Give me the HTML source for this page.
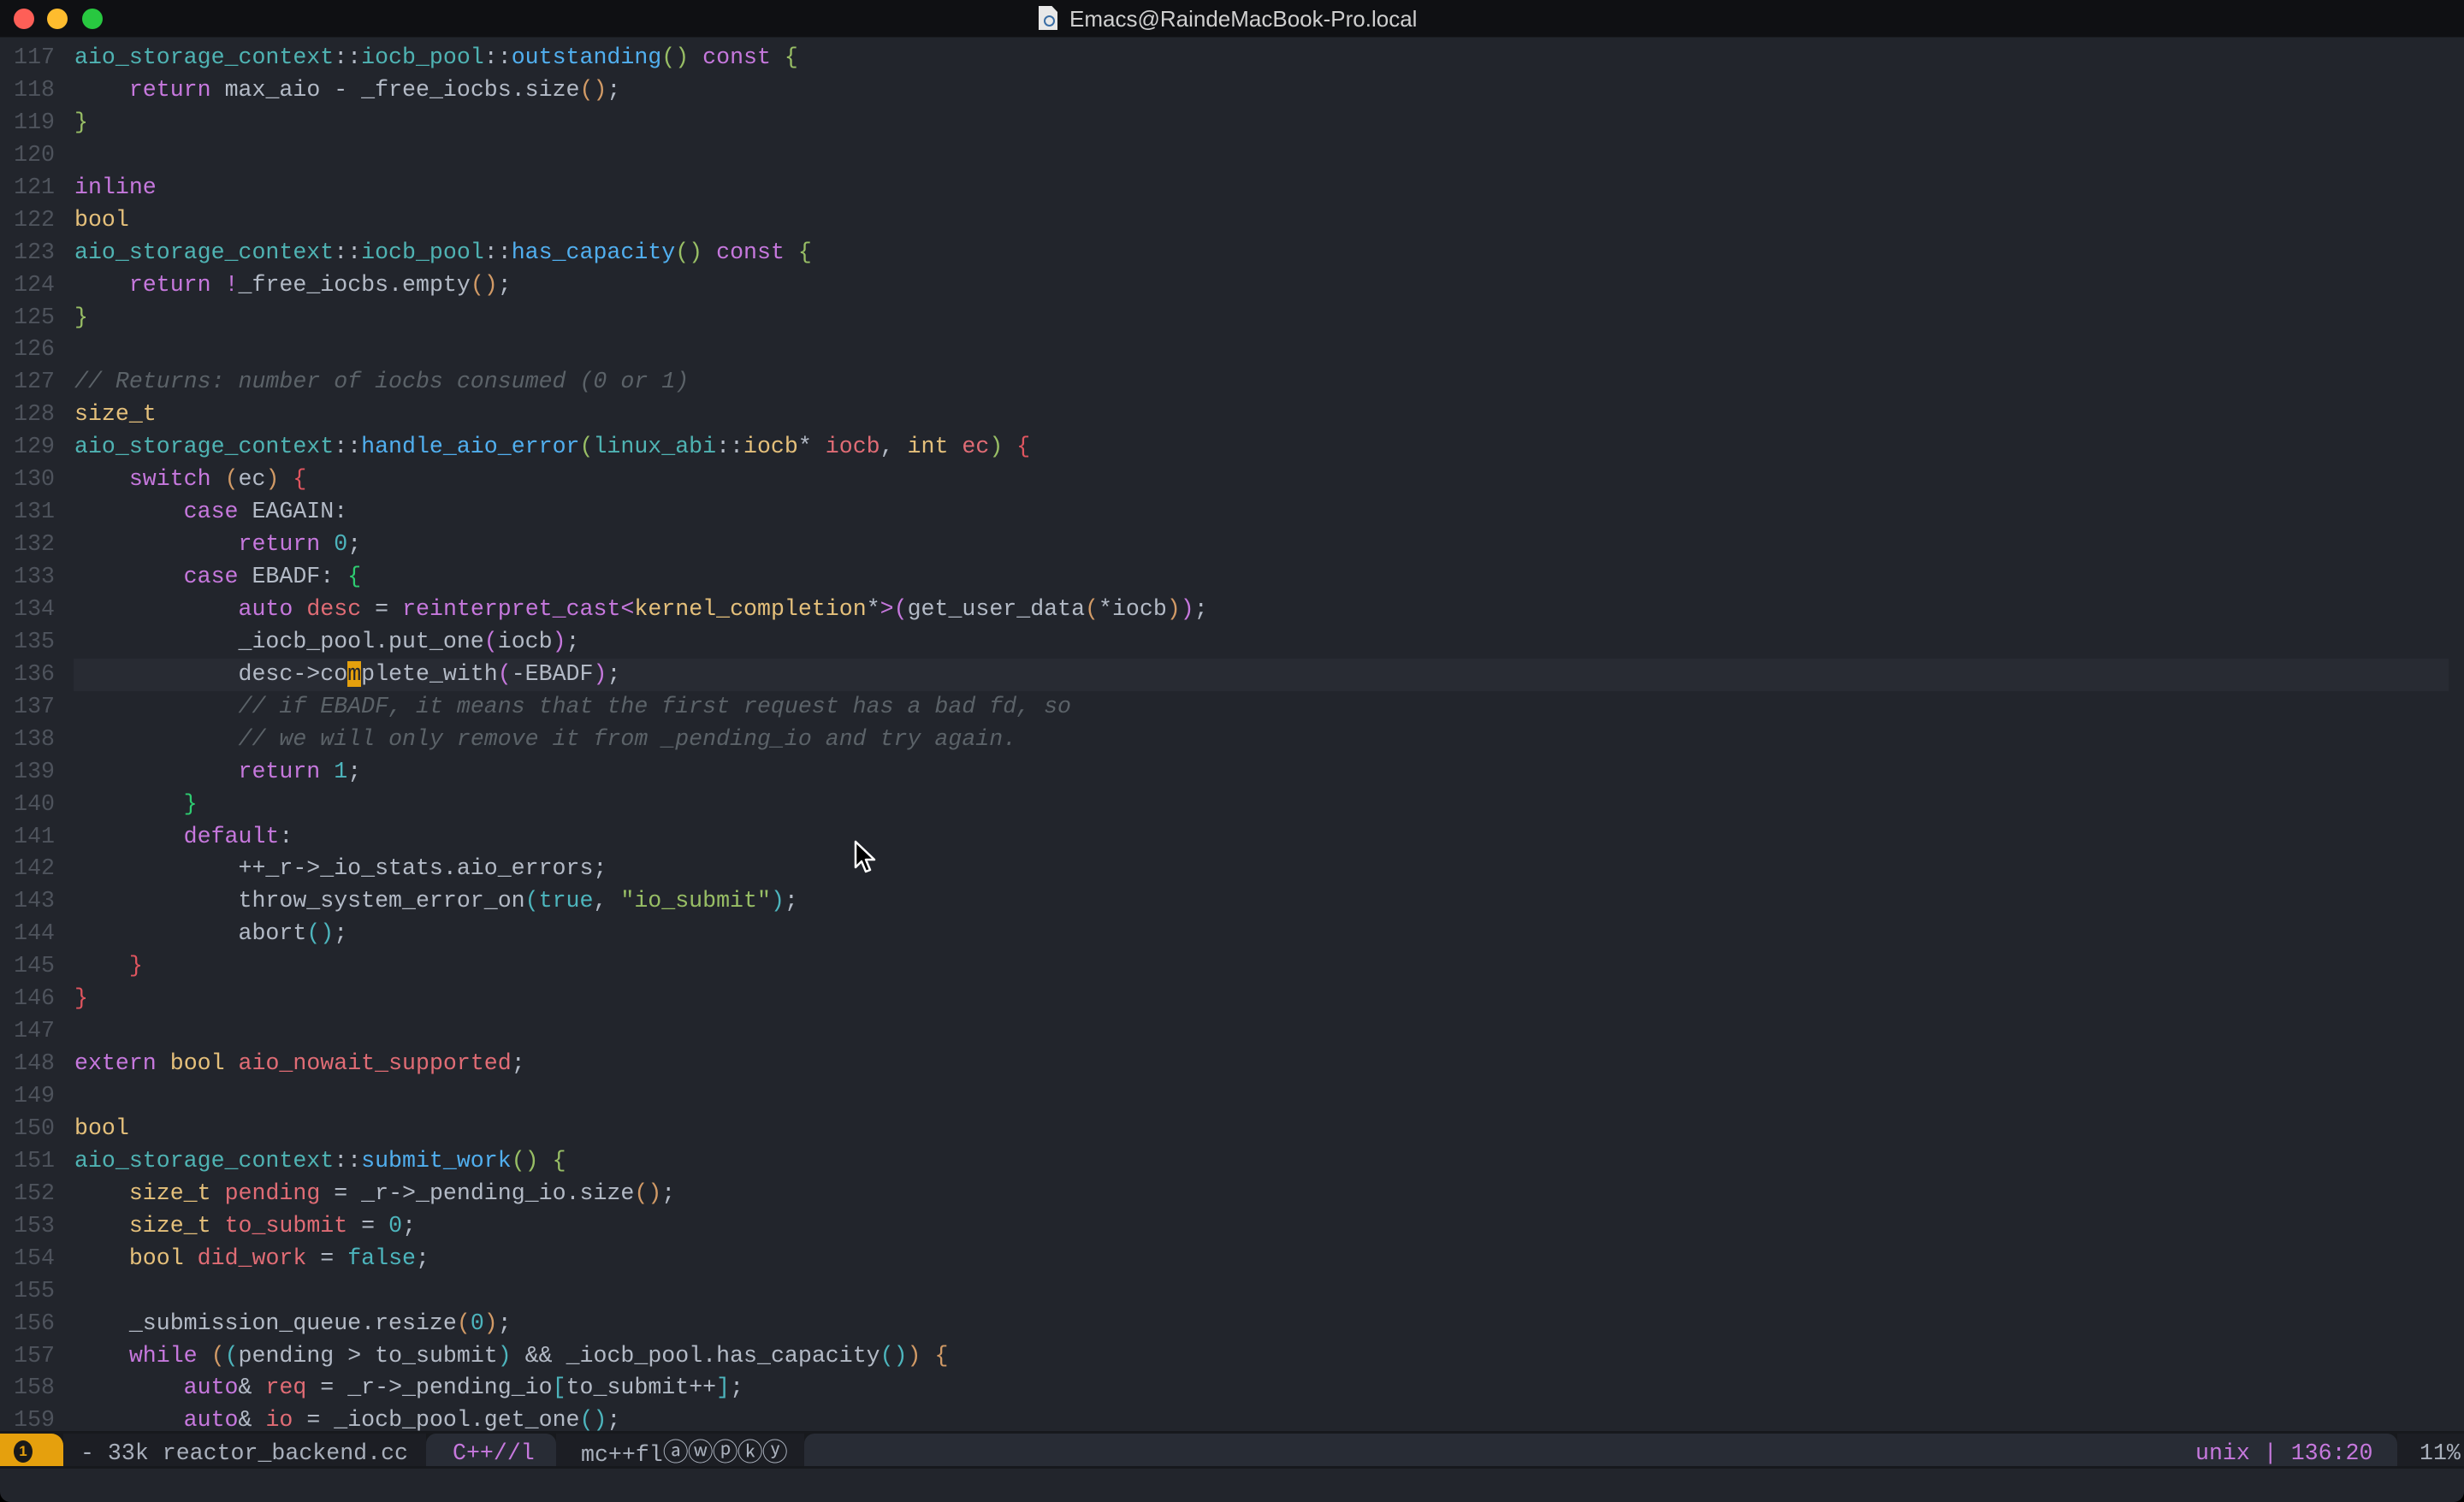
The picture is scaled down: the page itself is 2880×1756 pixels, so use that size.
<!DOCTYPE html>
<html><head><meta charset="utf-8"><style>
html,body{margin:0;padding:0;background:#000;}
#win{position:relative;width:2880px;height:1756px;background:#22252c;overflow:hidden;border-radius:0 0 12px 12px;font-family:"Liberation Mono",monospace;}
#title{position:absolute;left:0;top:0;width:2880px;height:43px;background:#0f1013;border-bottom:1px solid #1a1c20;}
.tl{position:absolute;top:10px;width:24px;height:24px;border-radius:50%;}
#ttext{position:absolute;left:1250px;top:7px;font-family:"Liberation Sans",sans-serif;font-size:26px;color:#cfcfcf;}
#ticon{position:absolute;left:1214px;top:7px;width:22px;height:28px;background:#e8e8e8;clip-path:polygon(0 0,70% 0,100% 25%,100% 100%,0 100%);}
#ticon:after{content:"";position:absolute;left:6px;top:11px;width:9px;height:9px;border-radius:50%;border:2px solid #3a6ea5;}
#hl{position:absolute;left:86px;top:770px;width:2776px;height:38px;background:#282b33;}
#nums{position:absolute;left:0;top:49px;width:64px;text-align:right;font-size:26.6px;line-height:37.93px;color:#4e535c;white-space:pre;}
#code{position:absolute;left:87px;top:49px;font-size:26.6px;line-height:37.93px;color:#b3bac6;white-space:pre;}
.k{color:#c678dd}.t{color:#e5c07b}.n{color:#4fb3b3}.f{color:#51afef}.v{color:#e06c75}
.c{color:#5b6268;font-style:italic}.s{color:#98be65}.cn{color:#4db5bd}
.g{color:#98be65}.o{color:#d19a66}.r{color:#e0555f}.G{color:#2ecc71}.p{color:#c678dd}.cy{color:#4db5bd}
.cur{background:#e5a00d;color:#22252c}
#ml{position:absolute;left:0;top:1673px;width:2880px;height:44px;background:#17191d;}
.seg{position:absolute;top:3px;height:38px;}
.mt{position:absolute;top:1680px;font-size:26.6px;line-height:38px;white-space:pre;}
</style></head><body><div id="win">
<div id="title">
<div class="tl" style="left:16px;background:#fe5f57"></div>
<div class="tl" style="left:55px;background:#febc2e"></div>
<div class="tl" style="left:96px;background:#28c840"></div>
<div id="ticon"></div>
<div id="ttext">Emacs@RaindeMacBook-Pro.local</div>
</div>
<div id="hl"></div>
<div id="nums">117
118
119
120
121
122
123
124
125
126
127
128
129
130
131
132
133
134
135
136
137
138
139
140
141
142
143
144
145
146
147
148
149
150
151
152
153
154
155
156
157
158
159</div>
<div id="code"><span class="n">aio_storage_context</span>::<span class="n">iocb_pool</span>::<span class="f">outstanding</span><span class="g">()</span> <span class="k">const</span> <span class="g">{</span>
    <span class="k">return</span> max_aio - _free_iocbs.size<span class="o">()</span>;
<span class="g">}</span>

<span class="k">inline</span>
<span class="t">bool</span>
<span class="n">aio_storage_context</span>::<span class="n">iocb_pool</span>::<span class="f">has_capacity</span><span class="g">()</span> <span class="k">const</span> <span class="g">{</span>
    <span class="k">return</span> <span class="k">!</span>_free_iocbs.empty<span class="o">()</span>;
<span class="g">}</span>

<span class="c">// Returns: number of iocbs consumed (0 or 1)</span>
<span class="t">size_t</span>
<span class="n">aio_storage_context</span>::<span class="f">handle_aio_error</span><span class="g">(</span><span class="n">linux_abi</span>::<span class="t">iocb</span>* <span class="v">iocb</span>, <span class="t">int</span> <span class="v">ec</span><span class="g">)</span> <span class="r">{</span>
    <span class="k">switch</span> <span class="o">(</span>ec<span class="o">)</span> <span class="r">{</span>
        <span class="k">case</span> EAGAIN:
            <span class="k">return</span> <span class="cn">0</span>;
        <span class="k">case</span> EBADF: <span class="G">{</span>
            <span class="k">auto</span> <span class="v">desc</span> = <span class="k">reinterpret_cast</span><span class="p">&lt;</span><span class="t">kernel_completion</span>*<span class="p">&gt;(</span>get_user_data<span class="o">(</span>*iocb<span class="o">)</span><span class="p">)</span>;
            _iocb_pool.put_one<span class="p">(</span>iocb<span class="p">)</span>;
            desc-&gt;co<span class="cur">m</span>plete_with<span class="p">(</span>-EBADF<span class="p">)</span>;
            <span class="c">// if EBADF, it means that the first request has a bad fd, so</span>
            <span class="c">// we will only remove it from _pending_io and try again.</span>
            <span class="k">return</span> <span class="cn">1</span>;
        <span class="G">}</span>
        <span class="k">default</span>:
            ++_r-&gt;_io_stats.aio_errors;
            throw_system_error_on<span class="cy">(</span><span class="cn">true</span>, <span class="s">"io_submit"</span><span class="cy">)</span>;
            abort<span class="cy">()</span>;
    <span class="r">}</span>
<span class="r">}</span>

<span class="k">extern</span> <span class="t">bool</span> <span class="v">aio_nowait_supported</span>;

<span class="t">bool</span>
<span class="n">aio_storage_context</span>::<span class="f">submit_work</span><span class="g">()</span> <span class="g">{</span>
    <span class="t">size_t</span> <span class="v">pending</span> = _r-&gt;_pending_io.size<span class="o">()</span>;
    <span class="t">size_t</span> <span class="v">to_submit</span> = <span class="cn">0</span>;
    <span class="t">bool</span> <span class="v">did_work</span> = <span class="cn">false</span>;

    _submission_queue.resize<span class="o">(</span><span class="cn">0</span><span class="o">)</span>;
    <span class="k">while</span> <span class="o">(</span><span class="cy">(</span>pending &gt; to_submit<span class="cy">)</span> &amp;&amp; _iocb_pool.has_capacity<span class="cy">()</span><span class="o">)</span> <span class="o">{</span>
        <span class="k">auto</span>&amp; <span class="v">req</span> = _r-&gt;_pending_io<span class="cy">[</span>to_submit++<span class="cy">]</span>;
        <span class="k">auto</span>&amp; <span class="v">io</span> = _iocb_pool.get_one<span class="cy">()</span>;</div>
<div id="ml">
<div class="seg" style="left:0;width:74px;background:#e5a00d;border-radius:0 14px 0 0"></div>
<div class="seg" style="left:74px;width:424px;background:#1c1e24"></div>
<div class="seg" style="left:498px;width:152px;background:#282c35;border-radius:12px 12px 0 0"></div>
<div class="seg" style="left:650px;width:290px;background:#1c1e24"></div>
<div class="seg" style="left:940px;width:1862px;background:#282c35;border-radius:12px 12px 0 0"></div>
<div class="seg" style="left:2802px;width:78px;background:#1c1e24"></div>
</div>
<div style="position:absolute;left:16px;top:1684px;width:22px;height:26px;border-radius:50%;background:#1a1a1a;color:#e5a00d;font:bold 17px 'Liberation Sans',sans-serif;text-align:center;line-height:26px">1</div>
<div class="mt" style="left:94px;color:#a9b0bc">- 33k reactor_backend.cc</div>
<div class="mt" style="left:529px;color:#c678dd">C++//l</div>
<div class="mt" style="left:679px;color:#a9b0bc">mc++fl<span style="font-family:'DejaVu Sans',sans-serif;font-size:30px;letter-spacing:-1px">ⓐⓦⓟⓚⓨ</span></div>
<div class="mt" style="left:2566px;color:#c678dd">unix | 136:20</div>
<div class="mt" style="left:2828px;color:#a9b0bc">11%</div>
<svg style="position:absolute;left:998px;top:982px" width="30" height="42" viewBox="0 0 30 42"><path d="M2 2 L2 32 L9 25 L14 37 L19 35 L14 23 L24 23 Z" fill="#000" stroke="#fff" stroke-width="2.5" stroke-linejoin="round"/></svg>
</div></body></html>
